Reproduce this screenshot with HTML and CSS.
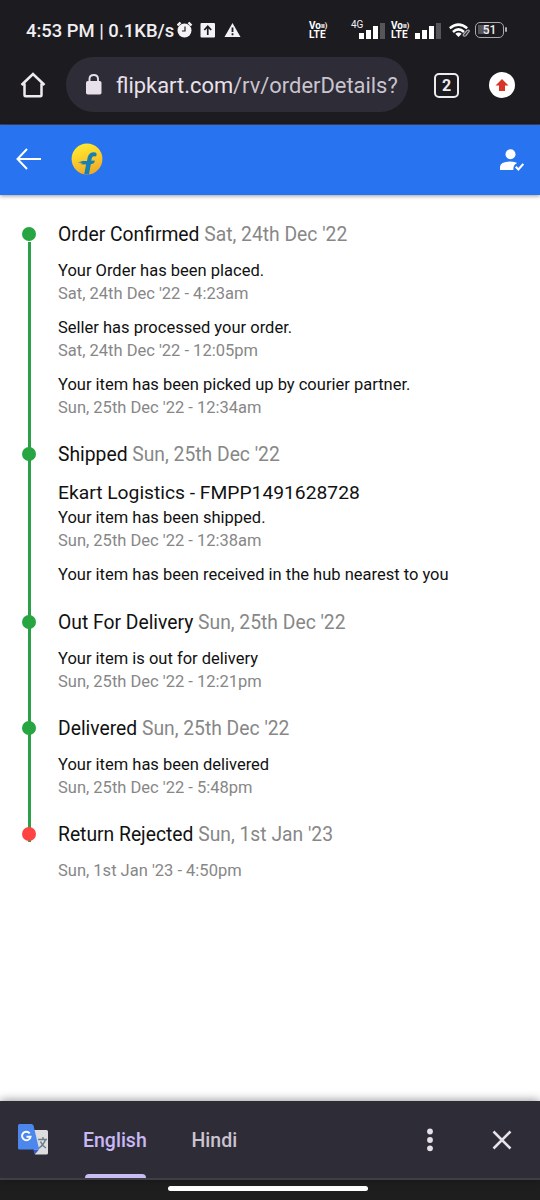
FILE: index.html
```html
<!DOCTYPE html>
<html lang="en">
<head>
<meta charset="utf-8">
<title>Order Details</title>
<link rel="stylesheet" href="styles.css">
</head>
<body>
<div class="screen">
  <div class="status">
    <span class="clock">4:53 PM | 0.1KB/s</span>
    <svg class="notices" width="64" height="18" viewBox="0 0 64 18">
      <circle cx="7.500" cy="9.500" r="7" fill="#f4f2f5"/>
      <path d="M.500 4.500 3.500 1.500M14.500 4.500 11.500 1.500" stroke="#f4f2f5" stroke-width="2.400"/>
      <path d="M8 5.500V10H5" fill="none" stroke="#1c1b20" stroke-width="1.200"/>
      <rect x="23.500" y="2" width="14.500" height="14.500" rx="1" fill="#f4f2f5"/>
      <path d="M30.750 14V5.500M27.300 9 30.750 5.300 34.200 9" fill="none" stroke="#1c1b20" stroke-width="1.700"/>
      <path d="M55.500 2 63.500 16H47.500Z" fill="#f4f2f5"/>
      <path d="M55.500 6.500V11M55.500 12.300V14.200" stroke="#1c1b20" stroke-width="1.800"/>
    </svg>
    <span class="volte volte-first"><span>Vo<i>ıı)</i></span><span class="lte">LTE</span></span>
    <span class="network">4G</span>
    <svg class="bars" width="27" height="18" viewBox="0 0 27 18">
      <path fill="#fff" d="M0 11h5v6H0zM7 8h5v9H7zM14 4h5v13h-5z"/><path fill="#56555a" d="M21 1h5v16h-5z"/>
    </svg>
    <span class="volte volte-second"><span>Vo<i>ıı)</i></span><span class="lte">LTE</span></span>
    <svg class="bars" width="27" height="18" viewBox="0 0 27 18">
      <path fill="#fff" d="M0 11h5v6H0zM7 8h5v9H7zM14 4h5v13h-5z"/><path fill="#56555a" d="M21 1h5v16h-5z"/>
    </svg>
    <svg class="wifi" width="22" height="16" viewBox="0 0 22 16">
      <g fill="none" stroke="#fff" stroke-width="2.500"><path d="M.800 5.200Q9.500-1.900 18.200 5.200"/><path d="M4 9Q9.500 3.800 15 9"/></g>
      <path d="M9.500 14 6.300 10.800Q9.500 8.200 12.700 10.800Z" fill="#fff"/>
      <path d="m14 12 4-4.500q2-1.200 2.300.7L17 12.500q-2 1.500-3-.5" fill="none" stroke="#aaa9ad" stroke-width="1.300"/>
    </svg>
    <span class="battery"><span>51</span></span>
  </div>

  <div class="toolbar">
    <svg class="home" width="26" height="26" viewBox="0 0 26 26"><path d="M1.500 13 13 2 24.500 13M4.500 11.500V23.200Q4.500 24.300 5.600 24.300H20.400Q21.500 24.300 21.500 23.200V11.500" fill="none" stroke="#eeebf0" stroke-width="2.500"/></svg>
    <div class="address">
      <svg class="lock" width="16" height="21" viewBox="0 0 16 21"><rect y="7" width="15.500" height="13.500" rx="1.800" fill="#e8e0eb"/><path d="M3.500 8V5Q3.500 1 7.750 1T12 5V8" fill="none" stroke="#e8e0eb" stroke-width="1.900"/></svg>
      <span class="url"><b>flipkart.com</b>/rv/orderDetails?</span>
    </div>
    <span class="tabs">2</span>
    <span class="update"><svg width="14" height="14" viewBox="0 0 14 14"><path d="M7 1 13.500 7.500H10V13H4V7.500H.500Z" fill="#da3427"/></svg></span>
  </div>

  <header class="appbar">
    <svg class="back" width="26" height="22" viewBox="0 0 26 22"><path d="M25 11H2M11 1 1.500 11 11 21" fill="none" stroke="#fff" stroke-width="2"/></svg>
    <svg class="logo" width="32" height="32" viewBox="0 0 32 32">
      <defs><linearGradient id="gold" x2=".3" y2="1"><stop stop-color="#fff035"/><stop offset=".45" stop-color="#fcd52c"/><stop offset="1" stop-color="#f1ad28"/></linearGradient></defs>
      <circle cx="16" cy="16" r="15.400" fill="url(#gold)"/>
      <path d="M13.200 31.200 15.100 21.500 9.800 21.300 11.500 20.400 6.600 19.800 11.600 19 8.500 18H16Q16.700 9.300 22.500 9.300Q26.300 9.100 25.500 12.500L24.300 13.500Q20.800 12.300 20.300 17.700L23.700 17.600Q24 20.900 19.800 21.300L18 31.300Z" fill="#1680b6"/>
    </svg>
    <svg class="account" width="25" height="22" viewBox="0 0 25 22"><circle cx="11.500" cy="5.200" r="5" fill="#fff"/><path d="M1 21V18Q1 12.500 11.500 12.500Q16 12.500 18.200 14Q14 15.500 14.400 21Z" fill="#fff"/><path d="m16.700 17.700 2.700 2.700 4.900-5.500" fill="none" stroke="#fff" stroke-width="2.100"/></svg>
  </header>

  <main class="timeline">
    <section class="stage">
      <h2>Order Confirmed <span>Sat, 24th Dec '22</span></h2>
      <div class="event"><p>Your Order has been placed.</p><time>Sat, 24th Dec '22 - 4:23am</time></div>
      <div class="event"><p>Seller has processed your order.</p><time>Sat, 24th Dec '22 - 12:05pm</time></div>
      <div class="event"><p>Your item has been picked up by courier partner.</p><time>Sun, 25th Dec '22 - 12:34am</time></div>
    </section>
    <section class="stage shipped">
      <h2>Shipped <span>Sun, 25th Dec '22</span></h2>
      <div class="event"><h3>Ekart Logistics - FMPP1491628728</h3><p>Your item has been shipped.</p><time>Sun, 25th Dec '22 - 12:38am</time></div>
      <div class="event"><p>Your item has been received in the hub nearest to you</p></div>
    </section>
    <section class="stage">
      <h2>Out For Delivery <span>Sun, 25th Dec '22</span></h2>
      <div class="event"><p>Your item is out for delivery</p><time>Sun, 25th Dec '22 - 12:21pm</time></div>
    </section>
    <section class="stage">
      <h2>Delivered <span>Sun, 25th Dec '22</span></h2>
      <div class="event"><p>Your item has been delivered</p><time>Sun, 25th Dec '22 - 5:48pm</time></div>
    </section>
    <section class="stage rejected">
      <h2>Return Rejected <span>Sun, 1st Jan '23</span></h2>
      <div class="event"><time>Sun, 1st Jan '23 - 4:50pm</time></div>
    </section>
  </main>

  <div class="translate">
    <svg class="gt" width="32" height="32" viewBox="0 0 32 32">
      <path d="M13 6H29.500Q31 6 31 7.500V29Q31 30.500 29.500 30.500H18Z" fill="#dddde0"/>
      <path d="M16 25.500H22L18 30.300Z" fill="#3659c5"/>
      <path d="M26 13V15.500M21 15.500H30M28.500 15.500Q27 20.500 21.500 24.500M23.500 17.500Q25 21.500 29 24" fill="none" stroke="#687c86" stroke-width="1.400"/>
      <path d="M2.500 0H15L16.500 1.500 22.200 25.500H2.500Q1 25.500 1 24V1.500Q1 0 2.500 0" fill="#4b87ed"/>
      <path d="M12.700 9.300A4.300 4.300 0 1 0 13.600 12.700H9.500" fill="none" stroke="#fff" stroke-width="1.900"/>
    </svg>
    <span class="lang active">English</span>
    <span class="lang hindi">Hindi</span>
    <svg class="more" width="6" height="24" viewBox="0 0 6 24" fill="#e6e0e9"><circle cx="3" cy="3.500" r="2.900"/><circle cx="3" cy="12" r="2.900"/><circle cx="3" cy="20.300" r="2.900"/></svg>
    <svg class="close" width="20" height="20" viewBox="0 0 20 20"><path d="m1.500 1.500 17 17m0-17-17 17" stroke="#e8e2eb" stroke-width="2.500"/></svg>
  </div>
  <div class="navbar"><span></span></div>
</div>
</body>
</html>
```
FILE: styles.css
```css
* { box-sizing: border-box; }
body { margin: 0; font-family: Roboto, "Liberation Sans", sans-serif; }
svg { display: block; flex: none; }
h2, h3, p { margin: 0; font-weight: 400; }

.screen { width: 540px; height: 1200px; display: flex; flex-direction: column; overflow: hidden; background: #fff; }

.status { height: 57px; flex: none; display: flex; align-items: center; padding: 4px 33px 0 26px; background: #1c1b20; color: #f1eff2; white-space: nowrap; }
.clock { width: 151px; flex: none; font-size: 18.4px; font-weight: 500; line-height: 22px; }
.notices { margin-top: -2px; }
.volte { width: 19px; flex: none; display: flex; flex-direction: column; margin-top: -1px; font-size: 10px; font-weight: 700; line-height: 9px; color: #fff; }
.volte i { font-size: 7.5px; font-style: normal; letter-spacing: -0.2px; vertical-align: 1px; }
.volte > span { height: 9px; }
.lte { letter-spacing: 0.3px; }
.volte-first { margin-left: 68px; }
.volte-second { margin-left: 5px; margin-right: 5px; }
.network { width: 13px; flex: none; margin: -12px -5px 0 23px; font-size: 10px; line-height: 10px; }
.wifi { margin-left: 7px; }
.battery { width: 29px; height: 16px; flex: none; margin: -2px 0 0 4px; border: 1.5px solid #aaa9ad; border-radius: 5px; background: linear-gradient(90deg, #56555a 50%, #1c1b20 50%) 2px 2px / 22px 9px no-repeat; position: relative; font-size: 12px; font-weight: 500; line-height: 15px; text-align: center; }
.battery::after { content: ""; position: absolute; right: -4px; top: 4px; width: 2px; height: 5px; border-radius: 1px; background: #aaa9ad; }

.toolbar { height: 68px; flex: none; display: flex; padding-left: 20px; background: #1c1b20; border-bottom: 1px solid #414350; }
.home { margin-top: 15px; }
.address { width: 342px; height: 55px; margin-left: 20px; display: flex; align-items: center; padding-left: 20px; border-radius: 28px; background: #2e2c37; }
.lock { margin-top: -1px; }
.url { margin: 3px 0 0 14px; font-size: 21.9px; line-height: 30px; color: #c9c4ce; white-space: nowrap; }
.url b { font-weight: 400; color: #e8e2eb; }
.tabs { width: 25px; height: 25px; margin: 16px 0 0 26px; border: 2.5px solid #eeebf0; border-radius: 5px; color: #eeebf0; font-size: 16px; font-weight: 700; line-height: 21px; text-align: center; }
.update { width: 26px; height: 26px; margin: 15px 0 0 29.5px; display: grid; place-items: center; border-radius: 50%; background: #fff; }

.appbar { height: 70px; flex: none; display: flex; align-items: center; padding: 0 16px 2px 16px; background: #2874f0; box-shadow: 0 1px 4px rgba(0, 0, 0, 0.4); z-index: 1; }
.logo { margin-left: 29px; }
.account { margin: 2px 0 0 auto; }

.timeline { flex: 1; padding: 27px 20px 0 22px; }
.stage { padding: 0 0 23.5px 36px; position: relative; }
.stage::before { content: ""; position: absolute; left: 5.5px; top: 20px; bottom: -20px; width: 3px; background: #2ba048; }
.stage::after { content: ""; position: absolute; left: 0; top: 4.5px; width: 14px; height: 14px; border-radius: 50%; background: #26a541; }
.shipped { padding-bottom: 24.5px; }
.rejected::before { top: 16px; bottom: auto; height: 3px; }
.rejected::after { background: #ff4343; }
.stage h2 { height: 24px; margin-bottom: 12.5px; font-size: 19.3px; line-height: 26px; color: #111; white-space: nowrap; }
.stage h2 span { color: #878787; }
.event + .event { margin-top: 11px; }
.event h3 { height: 27px; font-size: 19.25px; line-height: 27px; color: #111; }
.event p { height: 23px; font-size: 16.5px; line-height: 23px; color: #111; white-space: nowrap; }
.event time { display: block; height: 23px; font-size: 16.5px; line-height: 23px; color: #878787; }

.translate { height: 79px; flex: none; display: flex; padding-left: 17px; background: #2e2c37; border-bottom: 2px solid #3f3d46; box-shadow: 0 -1px 9px rgba(0, 0, 0, 0.4); z-index: 1; }
.gt { margin-top: 23px; }
.lang { height: 77px; font-size: 19.5px; font-weight: 500; line-height: 80px; color: #cac4d0; white-space: nowrap; }
.active { width: 64px; margin-left: 34px; color: #c9b8f5; position: relative; }
.active::after { content: ""; position: absolute; left: 2px; bottom: 0; width: 61px; height: 4px; border-radius: 4px 4px 0 0; background: #cabdf3; }
.hindi { width: 46px; margin-left: 44.5px; }
.more { margin: 27px 0 0 189.5px; }
.close { margin: 29px 0 0 58.5px; }
.navbar { height: 20px; flex: none; padding: 6px 0 0 168px; background: #1e1e1e; }
.navbar span { display: block; width: 200px; height: 5px; border-radius: 3px; background: #fff; }
```
